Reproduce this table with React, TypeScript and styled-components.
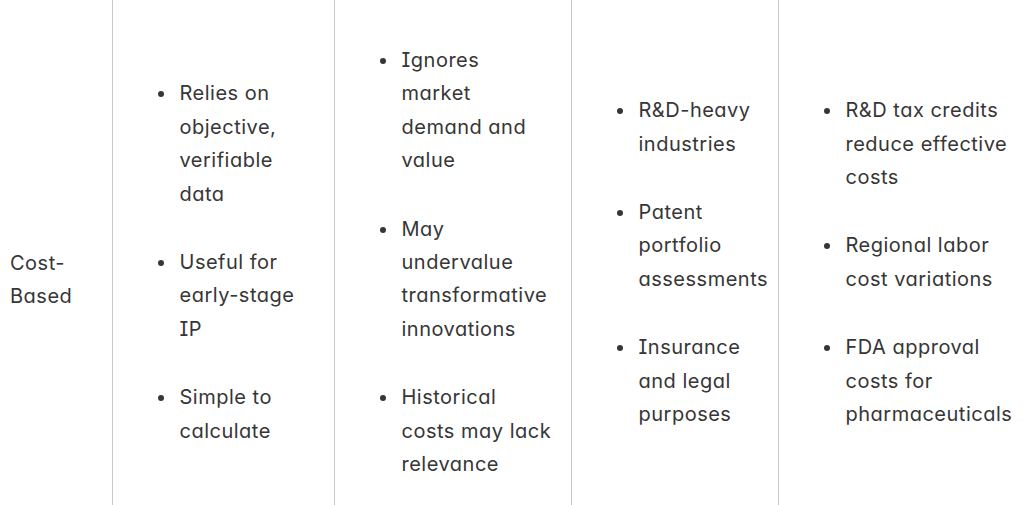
import React from "react";
import styled, { createGlobalStyle } from "styled-components";

const Global = createGlobalStyle`
  html, body {
    margin: 0;
    padding: 0;
    background: #ffffff;
    overflow: hidden;
  }
  body {
    font-family: Inter, "Noto Sans", sans-serif;
    font-feature-settings: "cv11", "cv08";
    color: #363636;
  }
`;

const Table = styled.table`
  border-collapse: collapse;
  table-layout: fixed;
  width: 1040px;
`;

const Col = styled.col<{ $w: number }>`
  width: ${(p) => p.$w}px;
`;

const Cell = styled.td`
  vertical-align: middle;
  padding: 44px 10px 42px 10px;
  border-right: 1px solid #c9c9c9;
  font-size: 20px;
  line-height: 33.4px;
  letter-spacing: 0.5px;
  white-space: nowrap;
  &:last-child {
    border-right: none;
  }
`;

const List = styled.ul`
  margin: 0;
  padding-left: 54px;
`;

const Item = styled.li`
  padding-left: 3px;
  margin-bottom: 35px;
`;

const Lines = ({ lines }: { lines: string[] }) => (
  <>
    {lines.map((l, i) => (
      <React.Fragment key={i}>
        {i > 0 && <br />}
        {l}
      </React.Fragment>
    ))}
  </>
);

const name = ["Cost-", "Based"];

const cols: string[][][] = [
  [
    ["Relies on", "objective,", "verifiable", "data"],
    ["Useful for", "early-stage", "IP"],
    ["Simple to", "calculate"],
  ],
  [
    ["Ignores", "market", "demand and", "value"],
    ["May", "undervalue", "transformative", "innovations"],
    ["Historical", "costs may lack", "relevance"],
  ],
  [
    ["R&D-heavy", "industries"],
    ["Patent", "portfolio", "assessments"],
    ["Insurance", "and legal", "purposes"],
  ],
  [
    ["R&D tax credits", "reduce effective", "costs"],
    ["Regional labor", "cost variations"],
    ["FDA approval", "costs for", "pharmaceuticals"],
  ],
];

export default function App() {
  return (
    <>
      <Global />
      <Table>
        <colgroup>
          <Col $w={112} />
          <Col $w={222} />
          <Col $w={237} />
          <Col $w={207} />
          <Col $w={262} />
        </colgroup>
        <tbody>
          <tr>
            <Cell>
              <Lines lines={name} />
            </Cell>
            {cols.map((items, i) => (
              <Cell key={i}>
                <List>
                  {items.map((lines, j) => (
                    <Item key={j}>
                      <Lines lines={lines} />
                    </Item>
                  ))}
                </List>
              </Cell>
            ))}
          </tr>
        </tbody>
      </Table>
    </>
  );
}
